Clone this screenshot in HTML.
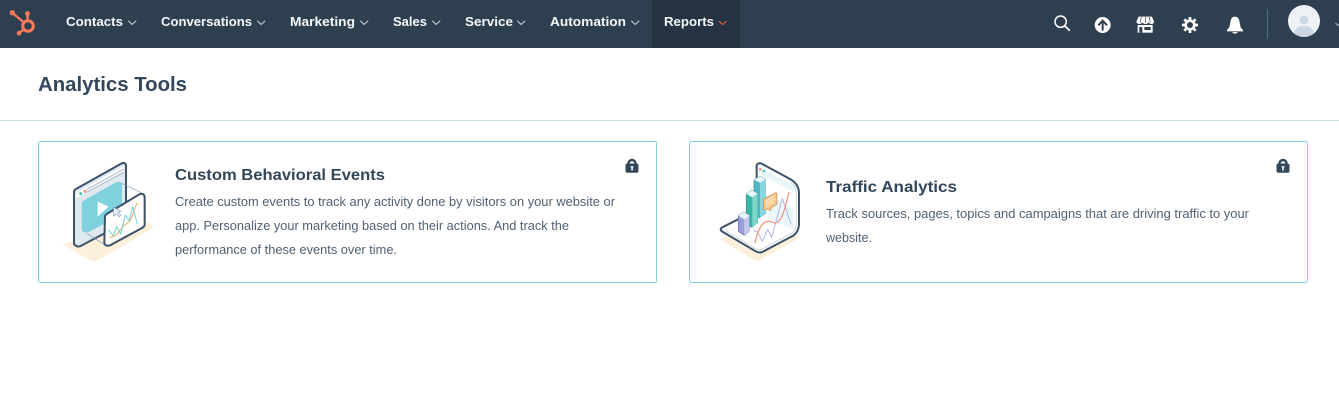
<!DOCTYPE html>
<html lang="en"><head><meta charset="utf-8"><title>Analytics Tools</title>
<style>
html,body{margin:0;padding:0;background:#fff;width:1339px;height:408px;overflow:hidden}
svg{display:block}
text{font-family:"Liberation Sans",sans-serif}
.n{font-size:13px;font-weight:700;fill:#f5f8fa}
.d{font-size:12.5px;fill:#4f6173}
.h{font-size:16px;font-weight:700;fill:#33475b}
.c{fill:none;stroke:#cbd6e2;stroke-width:1;stroke-linecap:round;stroke-linejoin:round}
</style></head><body>
<svg width="1339" height="408" viewBox="0 0 1339 408" xmlns="http://www.w3.org/2000/svg">
<rect width="1339" height="408" fill="#fff"/>
<rect width="1339" height="48" fill="#2e3f50"/>
<rect x="652" width="88" height="48" fill="#253342"/>
<!-- logo -->
<g fill="none" stroke="#ff7a59" stroke-width="2.400"><circle cx="28" cy="26" r="5.300" stroke-width="3"/><path d="M12.500 13L24 22.500M27.500 14V20M19 33L24.500 29"/></g>
<g fill="#ff7a59"><circle cx="12.300" cy="12.700" r="2.600"/><circle cx="27.500" cy="13.500" r="2.400"/><circle cx="19" cy="33.300" r="2.300"/></g>
<!-- nav -->
<text class="n" x="66" y="26" textLength="57" lengthAdjust="spacingAndGlyphs">Contacts</text><path class="c" d="M128.500 21l3.700 3.500 3.700-3.500"/>
<text class="n" x="161" y="26" textLength="91" lengthAdjust="spacingAndGlyphs">Conversations</text><path class="c" d="M257.500 21l3.700 3.500 3.700-3.500"/>
<text class="n" x="290" y="26" textLength="65" lengthAdjust="spacingAndGlyphs">Marketing</text><path class="c" d="M360.500 21l3.700 3.500 3.700-3.500"/>
<text class="n" x="393" y="26" textLength="34" lengthAdjust="spacingAndGlyphs">Sales</text><path class="c" d="M432.500 21l3.700 3.500 3.700-3.500"/>
<text class="n" x="465" y="26" textLength="48" lengthAdjust="spacingAndGlyphs">Service</text><path class="c" d="M517.500 21l3.700 3.500 3.700-3.500"/>
<text class="n" x="550" y="26" textLength="76" lengthAdjust="spacingAndGlyphs">Automation</text><path class="c" d="M631.500 21l3.700 3.500 3.700-3.500"/>
<text class="n" x="664" y="26" textLength="50" lengthAdjust="spacingAndGlyphs">Reports</text><path d="M719 21l3.700 3.500 3.700-3.500" fill="none" stroke="#d9634a" stroke-width="1.200"/>
<!-- right icons -->
<g transform="translate(1030,0) scale(.3333)">
<circle cx="92" cy="65" r="17" fill="none" stroke="#fff" stroke-width="4.500"/><path d="M105 78L118 91" stroke="#fff" stroke-width="5" stroke-linecap="round"/>
<circle cx="218" cy="75" r="24" fill="#fff"/><path d="M218 92V64M205 76L218 62L231 76" fill="none" stroke="#2e3f50" stroke-width="6"/>
<path d="M326 50H366L372 65Q372 72 365 72Q358 72 356 67Q352 72 346 72Q340 72 337 67Q334 72 328 72Q320 72 319 65Z" fill="#fff"/><path d="M334 51L331 68M346 51V68M358 51L361 68" stroke="#2e3f50" stroke-width="2"/>
<path d="M323 75H368V98H323Z" fill="#fff"/><rect x="343" y="81" width="19" height="9" fill="#2e3f50"/><rect x="328" y="81" width="9" height="17" fill="#2e3f50"/>
<g transform="translate(480,75)"><circle r="13" fill="none" stroke="#fff" stroke-width="8"/><g stroke="#fff" stroke-width="8"><path d="M0-24V-15M0 24V15M-24 0H-15M24 0H15M-17-17L-11-11M17 17L11 11M-17 17L-11 11M17-17L11-11"/></g></g>
<path d="M615 50C622 50 626 54 628 62L632 82L639 90V94H591V90L598 82L602 62C604 54 608 50 615 50Z" fill="#fff"/><path d="M607 96H623Q621 101 615 101Q609 101 607 96Z" fill="#fff"/>
</g>
<rect x="1267" y="9" width="1" height="30" fill="#516f90"/>
<circle cx="1304" cy="21" r="16" fill="#eef2f6"/><circle cx="1304" cy="20" r="4.300" fill="#cbd6e2"/><path d="M1294 33Q1296 26 1304 26Q1312 26 1314 33Q1310 37 1304 37Q1298 37 1294 33Z" fill="#cbd6e2"/>
<path d="M1335.500 23l2.500 2.500 2.500-2.500" fill="none" stroke="#aab8c6" stroke-width="1"/>
<!-- title -->
<text x="38" y="91" font-size="20" font-weight="700" fill="#33475b" textLength="149" lengthAdjust="spacingAndGlyphs">Analytics Tools</text>
<rect y="120" width="1339" height="1" fill="#cbe4ea"/>
<!-- cards -->
<rect x="38.500" y="141.500" width="618" height="141" rx="2" fill="#fff" stroke="#7fd1de"/>
<rect x="689.500" y="141.500" width="618" height="141" rx="2" fill="#fff" stroke="#7fd1de"/>
<!-- locks -->
<g><path d="M628.500 165V163.500a3.500 3.500 0 0 1 7 0V165" fill="none" stroke="#33475b" stroke-width="2.400"/><rect x="625.500" y="163.500" width="13" height="9.300" rx="1.800" fill="#33475b"/><rect x="631.300" y="166.500" width="1.500" height="4" fill="#fff"/><rect x="630.500" y="166.200" width="3" height="1.200" fill="#fff"/></g>
<g transform="translate(651,0)"><path d="M628.500 165V163.500a3.500 3.500 0 0 1 7 0V165" fill="none" stroke="#33475b" stroke-width="2.400"/><rect x="625.500" y="163.500" width="13" height="9.300" rx="1.800" fill="#33475b"/><rect x="631.300" y="166.500" width="1.500" height="4" fill="#fff"/><rect x="630.500" y="166.200" width="3" height="1.200" fill="#fff"/></g>
<!-- card text -->
<text class="h" x="175" y="180" textLength="210" lengthAdjust="spacingAndGlyphs">Custom Behavioral Events</text>
<text class="d" x="175" y="206" textLength="440" lengthAdjust="spacingAndGlyphs">Create custom events to track any activity done by visitors on your website or</text>
<text class="d" x="175" y="230" textLength="394" lengthAdjust="spacingAndGlyphs">app. Personalize your marketing based on their actions. And track the</text>
<text class="d" x="175" y="254" textLength="222" lengthAdjust="spacingAndGlyphs">performance of these events over time.</text>
<text class="h" x="826" y="192" textLength="131" lengthAdjust="spacingAndGlyphs">Traffic Analytics</text>
<text class="d" x="826" y="218" textLength="423" lengthAdjust="spacingAndGlyphs">Track sources, pages, topics and campaigns that are driving traffic to your</text>
<text class="d" x="826" y="242" textLength="46" lengthAdjust="spacingAndGlyphs">website.</text>
<!-- illustration 1 -->
<g transform="translate(50,150) scale(.3333)" stroke-linejoin="round" stroke-linecap="round">
<path d="M38 283L270 213Q300 215 312 232L145 330Q130 338 115 328Z" fill="#fdf0db"/>
<path d="M72 125Q72 120 78 117L215 40Q226 36 228 46V208Q228 216 220 220L92 288Q80 293 72 282Z" fill="#e1e9f0" stroke="#3c5269" stroke-width="6"/>
<path d="M78 128L223 47V62L78 145Z" fill="#fff"/>
<path d="M112 118L220 58M112 126L220 68" stroke="#a9b9c8" stroke-width="3"/>
<circle cx="92" cy="131" r="4.500" fill="#4fc3b4"/><circle cx="105" cy="124" r="4.500" fill="#f2937a"/>
<path d="M95 162Q95 155 102 151L196 98Q214 90 216 104V186Q216 194 208 198L116 246Q97 252 95 236Z" fill="#7fd1de"/>
<path d="M143 155V200L176 170Z" fill="#fff"/>
<path d="M215 100L282 132M110 250L165 285" fill="none" stroke="#7c98b6" stroke-width="2"/>
<path d="M165 200Q165 195 172 191L268 133Q283 128 284 142V224Q284 230 276 234L180 286Q165 291 163 278Z" fill="#fff" stroke="#3c5269" stroke-width="6"/>
<path d="M180 262C205 262 210 232 228 222C250 212 248 180 262 160" fill="none" stroke="#f5b76b" stroke-width="3.500"/>
<path d="M176 240L190 258L200 230L212 252L226 195L238 212L248 170L262 222" fill="none" stroke="#6fd0dd" stroke-width="3"/>
<path d="M191 172V198L198 192L208 200L212 194L204 188L212 184Z" fill="#eaf0f6" stroke="#7c98b6" stroke-width="2"/>
</g>
<!-- illustration 2 -->
<g transform="translate(705,150) scale(.3333)" stroke-linejoin="round" stroke-linecap="round">
<path d="M45 268L160 215L285 262L170 328Q160 335 148 330Z" fill="#fdf0db"/>
<path d="M155 48Q156 38 168 40L255 87Q282 102 282 130V225Q280 246 266 256L172 306Q162 310 152 304L52 245Q42 238 52 232L155 180Z" fill="#fff" stroke="#3c5269" stroke-width="6"/>
<path d="M258 98Q274 108 274 132V222Q273 240 262 248L170 298Q162 302 154 298L60 240" fill="none" stroke="#cbd6e2" stroke-width="3"/>
<path d="M160 50L268 108V126L160 68Z" fill="#e5f5f8"/>
<circle cx="166" cy="58" r="4" fill="#f2937a"/><circle cx="177" cy="63" r="4" fill="#4fc3b4"/>
<path d="M180 130L268 178V240L190 205Z" fill="#e9f7f9"/>
<path d="M80 236L160 275M120 215L200 258M180 130V200M220 150V230" fill="none" stroke="#e5edf3" stroke-width="2"/>
<path d="M147 90L165 78L181 88V190L163 204L147 192Z" fill="#4fb8c4" stroke="#3f8d9c" stroke-width="2"/><path d="M165 95L181 88V190L165 204Z" fill="#8ad6e0"/><path d="M147 90L165 78L181 88L165 98Z" fill="#e5f5f8"/>
<path d="M124 132L140 120L158 130V218L140 232L124 220Z" fill="#39b5a6" stroke="#2f8c85" stroke-width="2"/><path d="M142 140L158 130V218L142 232Z" fill="#7fd6cb"/><path d="M124 132L140 120L158 130L142 142Z" fill="#e5f5f8"/>
<path d="M100 197L116 186L133 196V244L118 256L100 244Z" fill="#9a9fdc" stroke="#6a6fae" stroke-width="2"/><path d="M118 206L133 196V244L118 256Z" fill="#c5c8ee"/><path d="M100 197L116 186L133 196L118 208Z" fill="#e5f5f8"/>
<path d="M175 148L212 128Q216 128 216 132V160Q216 164 210 166L200 172L196 182L190 176L180 180Q175 180 175 176Z" fill="#f8c98a" stroke="#b98a4d" stroke-width="2"/>
<path d="M184 152L206 140M184 160L206 148M184 168L206 156" stroke="#fff" stroke-width="2"/>
<path d="M146 242L158 246L172 274L188 238L200 262L232 145L258 222" fill="none" stroke="#b3b6ea" stroke-width="3"/>
<path d="M150 278C162 225 180 205 205 218C232 225 240 170 252 128" fill="none" stroke="#f58f72" stroke-width="3.500"/>
</g>
</svg>
</body></html>
